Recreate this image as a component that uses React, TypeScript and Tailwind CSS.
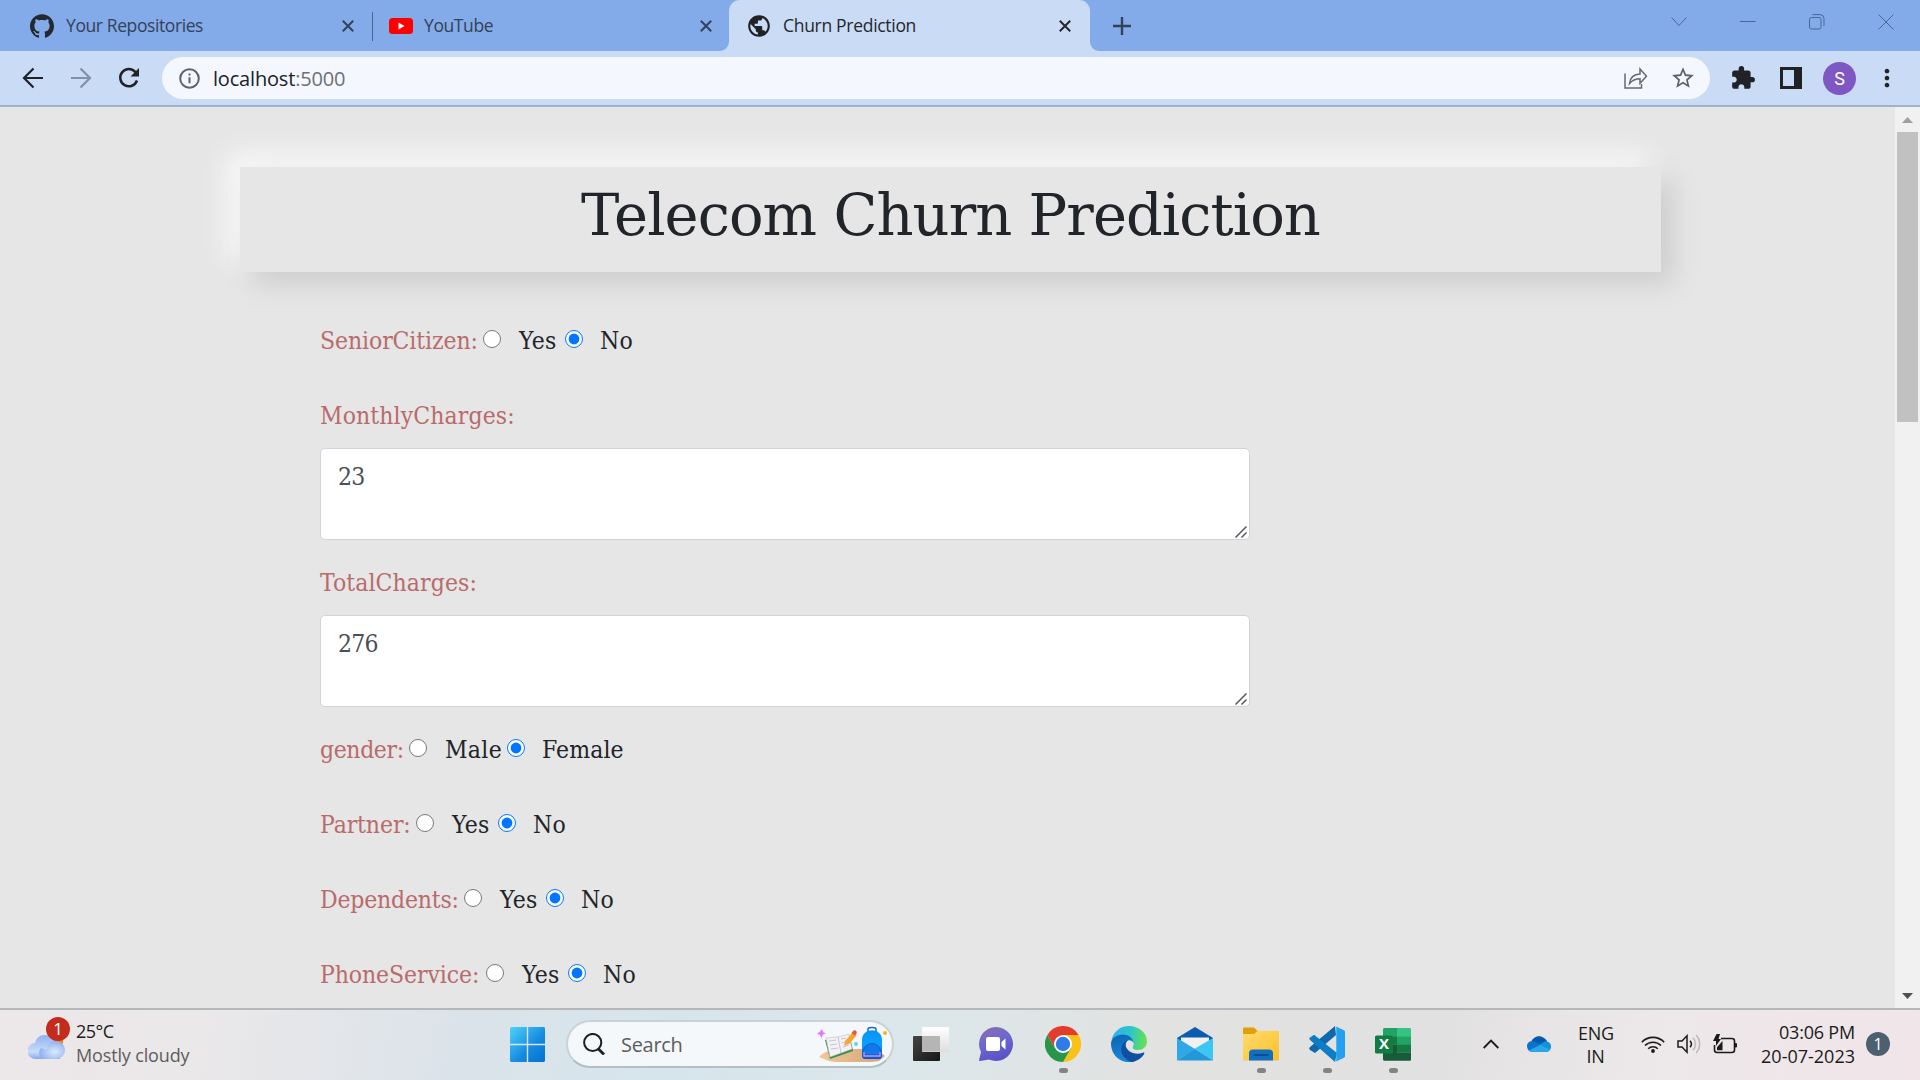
import type { ReactNode } from "react";
import { MdExtension, MdMoreVert, MdPublic, MdStarBorder } from "react-icons/md";
import { SiGithub } from "react-icons/si";

function Cross({ className }: { className: string }) {
  return (
    <svg viewBox="0 0 12 12" className={className} fill="none" stroke="currentColor" strokeWidth="2">
      <path d="M.8.8l10.4 10.4M11.2.8L.8 11.2" />
    </svg>
  );
}

function YouTubeMark() {
  return (
    <svg viewBox="0 0 24 16" className="h-4 w-6 shrink-0">
      <rect width="24" height="16" rx="3.5" fill="#f00" />
      <path d="M9.5 4.6v6.8l6-3.4z" fill="#fff" />
    </svg>
  );
}

function TabStrip() {
  return (
    <div className="flex h-[51px] bg-[#84abe9] text-[17.5px] tracking-[-0.4px] text-[#33415a]">
      <div className="flex w-[372px] items-center pl-[30px] pr-[18px]">
        <SiGithub className="h-6 w-6 text-[#24292f]" />
        <span className="ml-3 flex-1">Your Repositories</span>
        <Cross className="h-3 w-3" />
      </div>
      <div className="mt-3 h-[29px] w-px bg-[#4c6690]" />
      <div className="flex w-[356px] items-center pl-4 pr-[17px]">
        <YouTubeMark />
        <span className="ml-[11px] flex-1">YouTube</span>
        <Cross className="h-3 w-3" />
      </div>
      <div className="relative flex w-[361px] items-center rounded-t-[11px] bg-[#cadbf6] pl-[17px] pr-[19px] text-[#24272d]">
        <svg viewBox="0 0 9 9" className="absolute bottom-0 left-[-9px] h-[9px] w-[9px]" fill="#cadbf6">
          <path d="M9 0v9H0a9 9 0 0 0 9-9z" />
        </svg>
        <svg viewBox="0 0 9 9" className="absolute bottom-0 right-[-9px] h-[9px] w-[9px]" fill="#cadbf6">
          <path d="M0 0v9h9a9 9 0 0 1-9-9z" />
        </svg>
        <MdPublic className="h-[26px] w-[26px] text-[#202226]" />
        <span className="ml-[11px] flex-1 tracking-[-0.3px]">Churn Prediction</span>
        <Cross className="h-3 w-3" />
      </div>
      <div className="flex flex-1 items-center pl-[23px]">
        <svg viewBox="0 0 18 18" className="h-[18px] w-[18px]" stroke="#33415a" strokeWidth="2.4">
          <path d="M9 0v18M0 9h18" />
        </svg>
      </div>
      <div className="flex h-[43px] items-center gap-[53px] pr-[26px] text-[#4a6696]">
        <svg viewBox="0 0 16 10" className="h-[10px] w-4" fill="none" stroke="currentColor">
          <path d="M.5.5L8 8.5 15.500.5" />
        </svg>
        <svg viewBox="0 0 16 16" className="h-4 w-4" stroke="currentColor">
          <path d="M0 7.500h15.500" />
        </svg>
        <svg viewBox="0 0 16 16" className="h-4 w-4" fill="none" stroke="currentColor">
          <rect x=".5" y="3.500" width="11.500" height="11.500" rx="2" />
          <path d="M3.500.6H11a4 4 0 0 1 4 4V12" />
        </svg>
        <svg viewBox="0 0 16 16" className="h-4 w-4" stroke="currentColor">
          <path d="M.5.5l15 15M15.500.5l-15 15" />
        </svg>
      </div>
    </div>
  );
}

function Toolbar() {
  return (
    <div className="flex h-[54px] items-center bg-[#cadbf6] pl-[22px]">
      <svg viewBox="0 0 22 22" className="h-[22px] w-[22px]" fill="none" stroke="#202226" strokeWidth="2.200">
        <path d="M21 11H2.500M11.500 1.500L2 11l9.500 9.500" />
      </svg>
      <svg viewBox="0 0 22 22" className="ml-[26px] h-[22px] w-[22px]" fill="none" stroke="#8290a9" strokeWidth="2.200">
        <path d="M1 11h18.500M10.500 1.500L20 11l-9.500 9.500" />
      </svg>
      <svg viewBox="0 0 22 22" className="ml-[26px] h-[22px] w-[22px]" fill="none">
        <path d="M19 13.500A8.600 8.600 0 1 1 17.500 5.200" stroke="#202226" strokeWidth="2.500" />
        <path d="M21 1v8.500h-8.500z" fill="#202226" />
      </svg>
      <div className="ml-[22px] flex h-[42px] w-[1548px] items-center rounded-full bg-[#f4f7fd] pl-[17px] pr-[14px]">
        <svg viewBox="0 0 21 21" className="h-[21px] w-[21px]" fill="none" stroke="#5f6368" strokeWidth="2">
          <circle cx="10.500" cy="10.500" r="9.300" />
          <path d="M10.500 9.300v6M10.500 5.500v2" />
        </svg>
        <span className="ml-[13px] flex-1 pt-px text-[20px] leading-[26px] tracking-[-0.18px] text-[#202226]">
          localhost<span className="text-[#6d7075]">:5000</span>
        </span>
        <svg viewBox="0 0 24 23" className="mr-[22px] h-[23px] w-6" fill="none" stroke="#66696e" strokeWidth="1.500">
          <path d="M1 6.500V21h16.500v-4" />
          <path d="M5.500 16.500c.6-5.400 4-9 10.500-9.400V2l6.500 7.300-6.500 7v-4.600c-4.600.1-7.600 1.300-10.500 4.800z" />
        </svg>
        <MdStarBorder className="h-[26px] w-[26px] text-[#5f6368]" />
      </div>
      <MdExtension className="ml-[20px] h-[26px] w-[26px] text-[#202226]" />
      <svg viewBox="0 0 22 22" className="ml-[24px] h-[22px] w-[22px]">
        <path fillRule="evenodd" d="M0 0h22v22H0zM3 3v16h11V3z" fill="#202226" />
      </svg>
      <div className="ml-[21px] flex h-[33px] w-[33px] items-center justify-center rounded-full bg-[#7e57c2] font-[Roboto] text-[18px] text-white">
        S
      </div>
      <MdMoreVert className="ml-[17px] h-[28px] w-[28px] text-[#202226]" />
    </div>
  );
}

function RadioRow({
  label,
  labelWidth,
  first,
  firstWidth,
  second,
}: {
  label: string;
  labelWidth: string;
  first: string;
  firstWidth: string;
  second: string;
}) {
  return (
    <div className="flex h-[75px] shrink-0 items-start leading-[38px]">
      <span className={`${labelWidth} shrink-0 text-[#b96b6b]`}>{label}</span>
      <input type="radio" name={label} className="mt-2 h-[18px] w-[18px]" readOnly />
      <span className={`${firstWidth} ml-[18px] tracking-[0.3px]`}>{first}</span>
      <input type="radio" name={label} className="mt-2 h-[18px] w-[18px]" defaultChecked />
      <span className="ml-[17px] tracking-[0.1px]">{second}</span>
    </div>
  );
}

function AreaField({ label, value }: { label: string; value: string }) {
  return (
    <div className="mb-6 shrink-0">
      <div className="h-[51px] leading-[38px] tracking-[0.1px] text-[#b96b6b]">{label}</div>
      <div className="relative h-[92px] w-[930px]">
        <textarea
          className="block h-full w-full resize-none rounded-[5px] border border-[#ced4da] bg-white px-[17px] py-[9px] leading-[38px] tracking-[-0.8px] text-[#495057]"
          defaultValue={value}
        />
        <svg viewBox="0 0 12 12" className="absolute bottom-[2px] right-[3px] h-3 w-3" stroke="#55585c" strokeWidth="1.500">
          <path d="M.5 11.500l11-11M6.500 11.500l5-5" />
        </svg>
      </div>
    </div>
  );
}

function Page() {
  return (
    <div className="flex h-[905px] border-b-2 border-[#b4b8ba] border-t-2 border-t-[#a2b2cd] bg-[#e6e6e6]">
      <div className="flex flex-1 flex-col overflow-hidden pl-[240px] pt-[60px] font-['DejaVu_Serif_Condensed','DejaVu_Serif',serif] text-[24.500px] tracking-[-0.1px] text-[#212529]">
        <h1 className="h-[105px] w-[1421px] shrink-0 bg-[#e6e6e6] pt-[13px] text-center font-['DejaVu_Serif',serif] text-[57.500px] leading-[72px] tracking-[-0.95px] shadow-[12px_12px_25px_#cdcdcd,-12px_-12px_25px_#fbfbfb]">
          Telecom Churn Prediction
        </h1>
        <form className="mt-[50px] flex flex-col pl-20">
          <RadioRow label="SeniorCitizen:" labelWidth="w-[163px]" first="Yes" firstWidth="w-[46px]" second="No" />
          <AreaField label="MonthlyCharges:" value="23" />
          <AreaField label="TotalCharges:" value="276" />
          <RadioRow label="gender:" labelWidth="w-[89px] tracking-[-0.4px]" first="Male" firstWidth="w-[62px]" second="Female" />
          <RadioRow label="Partner:" labelWidth="w-[96px]" first="Yes" firstWidth="w-[46px]" second="No" />
          <RadioRow label="Dependents:" labelWidth="w-[144px] tracking-[-0.2px]" first="Yes" firstWidth="w-[46px]" second="No" />
          <RadioRow label="PhoneService:" labelWidth="w-[166px]" first="Yes" firstWidth="w-[46px]" second="No" />
        </form>
      </div>
      <div className="flex w-[25px] flex-col items-center bg-[#f1f1f1]">
        <svg viewBox="0 0 11 6" className="mt-[10px] h-[6px] w-[11px]" fill="#a0a0a0">
          <path d="M0 6l5.500-6L11 6z" />
        </svg>
        <div className="mt-[9px] h-[290px] w-[21px] bg-[#c1c1c1]" />
        <svg viewBox="0 0 11 6" className="mb-[9px] mt-auto h-[6px] w-[11px]" fill="#505050">
          <path d="M0 0l5.500 6L11 0z" />
        </svg>
      </div>
    </div>
  );
}

function WeatherIcon() {
  return (
    <div className="relative mb-[11px] h-[43px] w-[37px]">
      <svg viewBox="0 0 37 43" className="h-full w-full">
        <defs>
          <linearGradient id="cloud" x1="0" y1="0" x2="0" y2="1">
            <stop offset="0" stopColor="#8fb2f2" />
            <stop offset=".7" stopColor="#c9dcf8" />
            <stop offset="1" stopColor="#86a9ee" />
          </linearGradient>
          <radialGradient id="cloudFront" cx=".6" cy=".6" r=".6">
            <stop offset="0" stopColor="#dceafc" />
            <stop offset="1" stopColor="#8eb0f0" />
          </radialGradient>
        </defs>
        <circle cx="26" cy="25" r="9" fill="#f7820e" />
        <path d="M8 42a8 8 0 0 1-1-16 10 10 0 0 1 19-2l6 18z" fill="url(#cloud)" />
        <path d="M15 42a7 7 0 0 1-2-11l6 2a9 9 0 1 1 10 9z" fill="url(#cloudFront)" />
      </svg>
      <span className="absolute left-[18px] top-0 flex h-6 w-6 items-center justify-center rounded-full bg-[#c42b1c] text-[17px] text-white">
        1
      </span>
    </div>
  );
}

function StartIcon() {
  return (
    <svg viewBox="0 0 35 35" className="h-[35px] w-[35px]">
      <defs>
        <linearGradient id="win" x1="0" y1="0" x2="35" y2="35" gradientUnits="userSpaceOnUse">
          <stop offset="0" stopColor="#4fd2fb" />
          <stop offset=".6" stopColor="#1489de" />
          <stop offset="1" stopColor="#0273d2" />
        </linearGradient>
      </defs>
      <path fill="url(#win)" d="M1 0h15.800v16.800H0V1zM18.200 0H34l1 1v15.800H18.200zM0 18.200h16.800V35H1l-1-1zM18.200 18.200H35V34l-1 1H18.200z" />
    </svg>
  );
}

function SearchArt() {
  return (
    <svg viewBox="0 0 70 36" className="h-9 w-[70px]">
      <defs>
        <linearGradient id="bag" x1="0" y1="0" x2="0" y2="1">
          <stop offset="0" stopColor="#0a93f4" />
          <stop offset=".5" stopColor="#0aa0ff" />
          <stop offset="1" stopColor="#1252c9" />
        </linearGradient>
        <linearGradient id="desk" x1="0" y1="0" x2="1" y2="0">
          <stop offset="0" stopColor="#f3c797" />
          <stop offset="1" stopColor="#cfa67a" />
        </linearGradient>
      </defs>
      <path d="M2 31c4-5 12-8 25-8h28c6 2 11 5 13 7l-6 5c-8 2-44 2-50 0z" fill="url(#desk)" />
      <path d="M8 14l25-4 3 15-23 8z" fill="#2f9147" />
      <path d="M9 12l12-1 11-3 3 15-11 4-11 4z" fill="#f3f0f7" stroke="#c2bccb" strokeWidth=".6" />
      <path d="M21 11l3 16M12 15l7-1M13 19l7-1M14 23l7-1M24 13l5-1M25 17l6-2M26 21l6-2" stroke="#b3afbd" strokeWidth=".7" />
      <path d="M27 20l1.500-5.500 7-8 4 3-7 8z" fill="#f6a62a" />
      <path d="M34.500 7l2-2.500c2-1 4 1 3 3L38 9.500z" fill="#e95349" />
      <path d="M5 3l1 3 3 1.500-3 1-1.500 3.500-1.500-3-3-1.500L2.500 6z" fill="#e07bfa" />
      <circle cx="39" cy="18" r="2" fill="#5fd3ea" />
      <circle cx="68" cy="7" r="2" fill="#fbb116" />
      <path d="M51 6V3c0-2 8-2 8 0v3" fill="none" stroke="#1667c5" strokeWidth="1.500" />
      <path d="M45 14c0-13 20-13 20 0v16c0 2-1 3-3 3H48c-2 0-3-1-3-3z" fill="url(#bag)" />
      <path d="M46 28c0-14 18-14 18 0" fill="#1478ec" stroke="#0b5ec4" />
      <path d="M47 26v4h16v-4" fill="none" stroke="#c990f5" strokeWidth="1.300" />
    </svg>
  );
}

function TaskViewIcon() {
  return (
    <svg viewBox="0 0 36 34" className="h-[34px] w-9">
      <defs>
        <linearGradient id="tv" x1="0" y1="0" x2="1" y2="1">
          <stop offset="0" stopColor="#444" />
          <stop offset="1" stopColor="#161616" />
        </linearGradient>
        <linearGradient id="tv2" x1="0" y1="0" x2="0" y2="1">
          <stop offset="0" stopColor="#fff" />
          <stop offset="1" stopColor="#dedede" />
        </linearGradient>
      </defs>
      <rect y="9" width="27" height="25" rx="1" fill="url(#tv)" />
      <rect x="9" width="27" height="25" rx="1" fill="url(#tv2)" />
      <path d="M9 9h18v15.500H9z" fill="#b5b5b5" />
    </svg>
  );
}

function ChatIcon() {
  return (
    <svg viewBox="0 0 34 34" className="mr-[2px] h-[34px] w-[34px]">
      <defs>
        <linearGradient id="chat" x1=".2" y1="0" x2=".6" y2="1">
          <stop offset="0" stopColor="#8a6bb4" />
          <stop offset=".45" stopColor="#6c68d0" />
          <stop offset="1" stopColor="#5950c4" />
        </linearGradient>
      </defs>
      <path d="M17 0a17 17 0 1 1-7 32.500L1 34c-1 0-1-1-.7-2L2 25A17 17 0 0 1 17 0z" fill="url(#chat)" />
      <rect x="7" y="10" width="14" height="14" rx="2" fill="#fff" />
      <path d="M22.500 15l4-3.500v11l-4-3.500z" fill="#fff" />
    </svg>
  );
}

function ChromeIcon() {
  return (
    <svg viewBox="0 0 36 36" className="h-9 w-9">
      <path d="M18 18L2.400 9A18 18 0 0 1 33.600 9z" fill="#e33b2e" />
      <path d="M18 18V9h15.600A18 18 0 0 1 18 36l7.800-13.500z" fill="#fbc116" />
      <path d="M18 18l7.800 4.500L18 36A18 18 0 0 1 2.400 9l7.800 13.500z" fill="#27964a" />
      <path d="M2.400 9L10.200 22.500 18 9z" fill="#e33b2e" />
      <circle cx="18" cy="18" r="9" fill="#fff" />
      <circle cx="18" cy="18" r="7.200" fill="#2f7bea" />
    </svg>
  );
}

function EdgeIcon() {
  return (
    <svg viewBox="0 0 36 36" className="h-9 w-9">
      <defs>
        <linearGradient id="edgeTop" x1="0" y1=".4" x2="1" y2=".5">
          <stop offset="0" stopColor="#2fb0ee" />
          <stop offset=".5" stopColor="#2cc4cf" />
          <stop offset="1" stopColor="#66e34b" />
        </linearGradient>
        <linearGradient id="edgeSide" x1="0" y1="0" x2=".3" y2="1">
          <stop offset="0" stopColor="#0c62b0" />
          <stop offset="1" stopColor="#1787dc" />
        </linearGradient>
      </defs>
      <path d="M.4 15C2 6 9 0 18 0c10 0 18 7 18 15 0 6-4 9-9 9-4 0-6-1.500-5-3.500C24 18 22 11 12 10.500 6 10.500 2 12 .4 15z" fill="url(#edgeTop)" />
      <path d="M0 18C0 12 6 8.500 12 8.500c6 0 10 4 10.500 8.500-2-4-8-4-8 3 0 7 3 12 9 15.300A18 18 0 0 1 0 18z" fill="url(#edgeSide)" />
      <path d="M17 14c-9 3-10 17 3.500 22C26 35.400 31 32 33.300 27.500c.4-1-.6-1.200-1.500-.8C24 30 15 25 14.500 19c0-2 1-4 2.500-5z" fill="#10509f" />
    </svg>
  );
}

function MailIcon() {
  return (
    <svg viewBox="0 0 36 34" className="h-[34px] w-9">
      <path d="M0 11L18 0l18 11v6H0z" fill="#0a5cae" />
      <path d="M4 10.500h28v12H4z" fill="#f1f1f1" />
      <path d="M36 11v22.500L17.500 21.700z" fill="#3cc6f4" />
      <path d="M17.500 21.700L36 33.500H0z" fill="#2297da" />
      <path d="M0 33.500V11l18 11z" fill="#2fa9e6" />
    </svg>
  );
}

function FolderIcon() {
  return (
    <svg viewBox="0 0 36 34" className="h-[34px] w-9">
      <defs>
        <linearGradient id="folder" x1="0" y1="0" x2="1" y2="1">
          <stop offset="0" stopColor="#ffdb70" />
          <stop offset="1" stopColor="#fcc026" />
        </linearGradient>
      </defs>
      <path d="M0 2c0-1 .5-1.500 1.500-1.500H11L14.500 4H35l1 1v4H0z" fill="#dfa00b" />
      <path d="M0 7h11l3.500-3H36v28c0 .8-.5 1.500-1.500 1.500h-33C.5 33.500 0 33 0 32z" fill="url(#folder)" />
      <path d="M6 33.500V26c0-2 1.500-3.500 3.500-3.500h17c2 0 3.500 1.500 3.500 3.500v7.500z" fill="#126fc0" />
      <path d="M10.500 28h15" stroke="#0a4887" strokeWidth="1.600" />
    </svg>
  );
}

function CodeIcon() {
  return (
    <svg viewBox="0 0 36 36" className="h-9 w-9">
      <path d="M26 0l1 9L6 27l-5-3c-1-1-1-2 0-3z" fill="#0c69ae" />
      <path d="M1 11.500l3-2c.7-.6 1.400-.5 2 0L28 27l-2 9L1 14c-1-1-1-1.700 0-2.500z" fill="#0d7ec6" />
      <path d="M26 0l8.500 4c1 .5 1.500 1 1.500 2v24c0 1-.5 1.500-1.500 2L26 36c1-.5 1.300-1 1.300-2V2c0-1-.3-1.600-1.300-2z" fill="#24a0f0" />
    </svg>
  );
}

function ExcelIcon() {
  return (
    <div className="relative h-[33px] w-9">
      <svg viewBox="0 0 36 33" className="h-full w-full">
        <path d="M8 1.500C8 .6 8.600 0 9.500 0H22v8.200H8z" fill="#21a366" />
        <path d="M22 0h12.500c1 0 1.500.6 1.500 1.500v6.700H22z" fill="#33c481" />
        <path d="M8 8.200h14v8H8z" fill="#107c41" />
        <path d="M22 8.200h14v8H22z" fill="#21a366" />
        <path d="M22 16.200h14v8H22z" fill="#107c41" />
        <path d="M8 16.200h14v8h14v7c0 1-.6 1.600-1.500 1.600h-25C8.600 32.800 8 32.200 8 31.300z" fill="#185c37" />
        <rect y="7.500" width="18" height="18" rx="1.500" fill="#107c41" />
      </svg>
      <span className="absolute left-0 top-[7px] flex h-[18px] w-[18px] items-center justify-center text-[15px] font-bold text-white">X</span>
    </div>
  );
}

function TaskButton({ children, running }: { children: ReactNode; running?: boolean }) {
  return (
    <div className="relative flex h-full w-[66px] items-center justify-center">
      {children}
      {running && <span className="absolute bottom-[5px] left-[29px] h-[5px] w-[9px] rounded-full bg-[#838383]" />}
    </div>
  );
}

function Tray() {
  return (
    <div className="ml-auto flex h-full items-center pr-[30px] text-[18px] leading-6 text-[#1b1b1b]">
      <svg viewBox="0 0 16 10" className="h-[10px] w-4" fill="none" stroke="#1b1b1b" strokeWidth="1.800">
        <path d="M.7 9L8 1.500 15.300 9" />
      </svg>
      <svg viewBox="0 0 24 16" className="ml-7 h-4 w-6">
        <path d="M4 6C6 1 12-2 17 2c2 1 3 3 3 4l-6 5z" fill="#0359ae" />
        <path d="M0 10c0-4 4-6 8-4l10 5-12 5C2 16 0 13 0 10z" fill="#0a73cf" />
        <path d="M12 9l5-3c4-1.500 7 1 7 4.500 0 3-2 5.500-5 5.500z" fill="#1490df" />
        <path d="M2 14.500L13 9l10 4.500c-1 1.500-2.500 2.500-4 2.500H6c-2 0-3-.5-4-1.500z" fill="#28a8ea" />
      </svg>
      <div className="ml-[27px] w-[35px] pt-[2px] text-center leading-[23px] tracking-[-0.3px]">
        <div>ENG</div>
        <div>IN</div>
      </div>
      <svg viewBox="0 0 24 18" className="ml-7 h-[18px] w-6" fill="none" stroke="#1b1b1b" strokeWidth="1.600">
        <path d="M.8 7.200a15.500 15.500 0 0 1 22.400 0M4 10.500a11.300 11.300 0 0 1 16 0M7.200 13.700a6.800 6.800 0 0 1 9.600 0" />
        <circle cx="12" cy="16" r="1.900" fill="#1b1b1b" stroke="none" />
      </svg>
      <svg viewBox="0 0 24 20" className="ml-3 h-5 w-6" fill="none" stroke="#1b1b1b" strokeWidth="1.500">
        <path d="M1 7h4l5-5.200v16.400L5 13H1zM13 6.700a5 5 0 0 1 0 6.600" />
        <path d="M16 3.800a9 9 0 0 1 0 12.400M19 1a13 13 0 0 1 0 18" stroke="#bcb9ba" />
      </svg>
      <svg viewBox="0 0 24 20" className="ml-3 h-5 w-6" fill="none">
        <path d="M8 4.500h11c1.500 0 2.500 1 2.500 2.500v9c0 1.500-1 2.500-2.500 2.500H4c-1.500 0-2.500-1-2.500-2.500v-5" stroke="#1b1b1b" strokeWidth="1.600" />
        <path d="M21.500 9h1.200c.8 0 1.300.5 1.300 1.300v2c0 .8-.5 1.200-1.300 1.200h-1.200zM4 16.300v-3L9.500 7v9.300zM3.500 0L0 7h3v5l5-7H5.500L7 0z" fill="#1b1b1b" />
      </svg>
      <div className="ml-[23px] w-[95px] whitespace-nowrap pb-px text-right">
        <div className="tracking-[-0.2px]">03:06 PM</div>
        <div>20-07-2023</div>
      </div>
      <div className="ml-[11px] flex h-6 w-6 items-center justify-center rounded-full bg-[#4c6070] text-[16px] text-white">1</div>
    </div>
  );
}

function Taskbar() {
  return (
    <div className="flex h-[70px] items-center bg-[linear-gradient(100deg,#ece7e8_0%,#ebe8e9_10%,#dbe3ea_24%,#d6e5ec_35%,#dce7ea_48%,#e2e2e1_60%,#e2e1e1_75%,#ece8e9_85%,#f1e5e9_100%)] pb-[2px]">
      <div className="flex w-[510px] items-center pl-[28px]">
        <WeatherIcon />
        <div className="ml-[11px] pb-[2px] text-[18px] leading-6 text-[#1b1b1b]">
          <div className="tracking-[-0.5px]">25°C</div>
          <div className="tracking-[-0.15px] text-[#5d5d5d]">Mostly cloudy</div>
        </div>
      </div>
      <StartIcon />
      <div className="ml-[21px] flex h-12 w-[328px] items-center rounded-full border-2 border-[#c9d3d6] border-b-[#b2bfc2] bg-[#f4f8fa] pl-[15px] pr-[5px]">
        <svg viewBox="0 0 22 22" className="h-[22px] w-[22px]" fill="none" stroke="#1f1f1f">
          <circle cx="9.700" cy="9.500" r="8.600" strokeWidth="2" />
          <path d="M15.500 16l5.500 5.500" strokeWidth="2.800" />
        </svg>
        <span className="ml-4 flex-1 pt-px text-[20px] tracking-[-0.3px] text-[#5a5d5f]">Search</span>
        <SearchArt />
      </div>
      <div className="ml-[4px] flex h-full">
        <TaskButton><TaskViewIcon /></TaskButton>
        <TaskButton><ChatIcon /></TaskButton>
        <TaskButton running><ChromeIcon /></TaskButton>
        <TaskButton><EdgeIcon /></TaskButton>
        <TaskButton><MailIcon /></TaskButton>
        <TaskButton running><FolderIcon /></TaskButton>
        <TaskButton running><CodeIcon /></TaskButton>
        <TaskButton running><ExcelIcon /></TaskButton>
      </div>
      <Tray />
    </div>
  );
}

export default function App() {
  return (
    <div className="flex h-[1080px] w-[1920px] flex-col overflow-hidden font-['Open_Sans','Noto_Sans',sans-serif]">
      <TabStrip />
      <Toolbar />
      <Page />
      <Taskbar />
    </div>
  );
}
